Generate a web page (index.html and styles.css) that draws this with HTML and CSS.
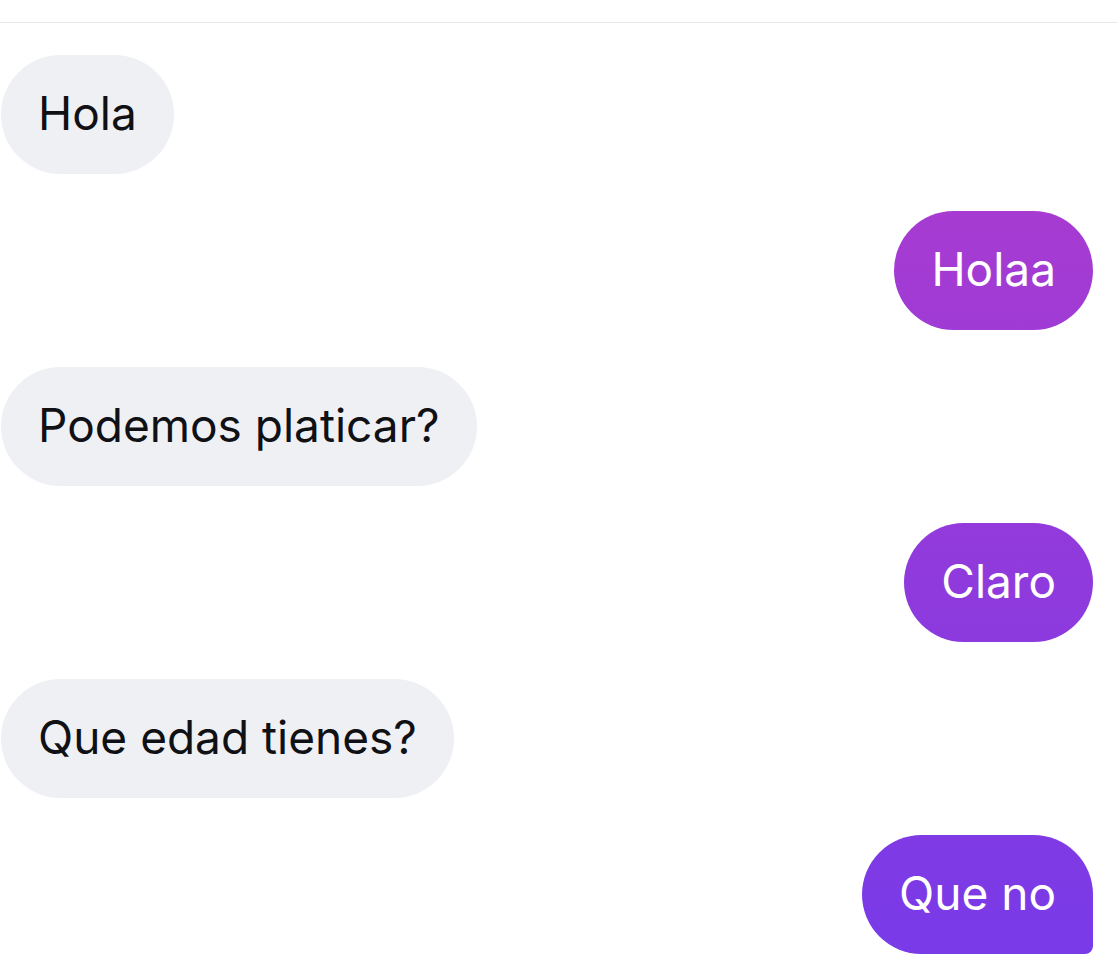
FILE: index.html
```html
<!DOCTYPE html>
<html lang="es">
<head>
<meta charset="utf-8">
<title>Chat</title>
<link rel="stylesheet" href="styles.css">
</head>
<body>
  <div class="topbar"></div>
  <main class="thread">
    <div class="row in"><div class="bubble">Hola</div></div>
    <div class="row out"><div class="bubble">Holaa</div></div>
    <div class="row in"><div class="bubble">Podemos platicar?</div></div>
    <div class="row out"><div class="bubble">Claro</div></div>
    <div class="row in"><div class="bubble">Que edad tienes?</div></div>
    <div class="row out last"><div class="bubble">Que no</div></div>
  </main>
</body>
</html>
```
FILE: styles.css
```css
html, body {
  margin: 0;
  padding: 0;
  background: #ffffff;
}
body {
  font-family: Inter, "Noto Sans", "Liberation Sans", sans-serif;
  width: 1117px;
  height: 959px;
  overflow: hidden;
}
.topbar {
  height: 22px;
  border-bottom: 1px solid #e7e7ea;
}
.thread {
  display: flex;
  flex-direction: column;
  gap: 37px;
  padding: 32px 24px 0 1px;
}
.row {
  display: flex;
}
.row.in { justify-content: flex-start; }
.row.out { justify-content: flex-end; }
.bubble {
  height: 119px;
  box-sizing: border-box;
  display: flex;
  align-items: center;
  padding: 0 37px 4px 37px;
  border-radius: 60px;
  font-size: 46px;
  letter-spacing: 0;
  white-space: nowrap;
}
.in .bubble {
  background: #eff0f4;
  color: #101114;
}
.out .bubble {
  color: #ffffff;
  background: linear-gradient(180deg, #b53bcb 0px, #a33bd3 270px, #8f3add 582px, #7c3ae6 894px, #793ae8 959px);
  background-attachment: fixed;
}
.out.last .bubble {
  border-bottom-right-radius: 8px;
}
```
